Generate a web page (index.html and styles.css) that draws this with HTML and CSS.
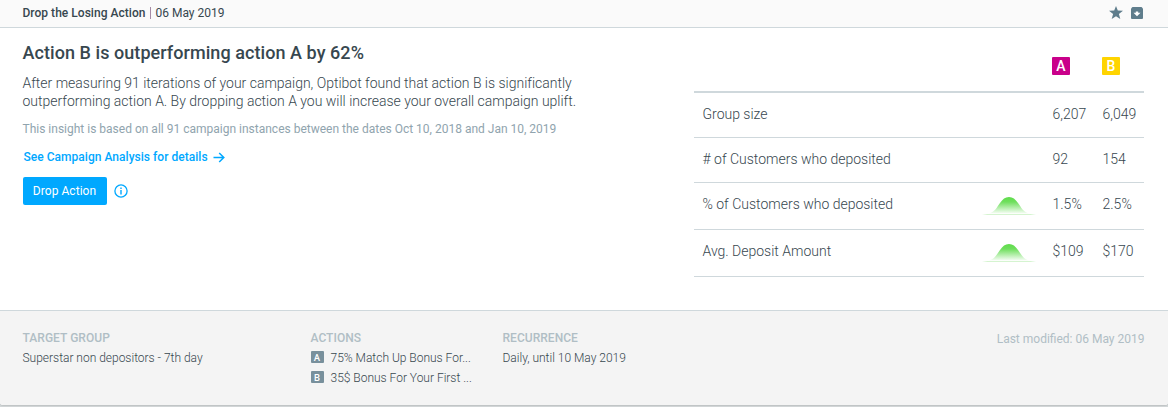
FILE: index.html
```html
<!DOCTYPE html>
<html lang="en">
<head>
    <meta charset="UTF-8">
    <meta name="viewport" content="width=device-width, initial-scale=1.0">
    <title>Drop the Losing Action</title>
    <link rel="stylesheet" href="styles.css">
</head>
<body>
    <div class="card">
        <!-- Top bar -->
        <div class="card-header">
            <div class="header-title"><b>Drop the Losing Action</b><span class="divider"></span><span class="date">06 May 2019</span></div>
            <div class="header-icons">
                <svg class="star" width="14" height="13" viewBox="0 0 14 13"><path d="M7 0l1.800 4.500 5.200.3-4.100 3.200 1.400 5L7 10.200 2.700 13l1.400-5L0 4.800l5.200-.3z" fill="#5f7d8c"/></svg>
                <svg class="archive" width="12" height="12" viewBox="0 0 12 12"><path d="M1.500 0h9L12 1.500V11a1 1 0 0 1-1 1H1a1 1 0 0 1-1-1V1.500z" fill="#5f7d8c"/><path d="M4.800 4.500h2.400v1.300h2.300L6 9.300 2.500 5.800h2.300z" fill="#fff"/></svg>
            </div>
        </div>

        <!-- Insight text and results table -->
        <div class="card-body">
            <div class="insight">
                <h1>Action B is outperforming action A by 62%</h1>
                <p class="summary">After measuring 91 iterations of your campaign, Optibot found that action B is significantly<br>outperforming action A. By dropping action A you will increase your overall campaign uplift.</p>
                <p class="note">This insight is based on all 91 campaign instances between the dates Oct 10, 2018 and Jan 10, 2019</p>
                <a class="details" href="#">See Campaign Analysis for details<svg width="12" height="11" viewBox="0 0 12 11"><path d="M.5 5.500h10.300M6.200 1l4.600 4.500L6.200 10" fill="none" stroke="#00a8ff" stroke-width="1.500"/></svg></a>
                <div class="buttons">
                    <button>Drop Action</button>
                    <svg width="14" height="14" viewBox="0 0 14 14"><circle cx="7" cy="7" r="6.100" fill="none" stroke="#00a8ff" stroke-width="1.300"/><path d="M6.300 3.500h1.400v1.400H6.300zM6.300 6h1.400v4.500H6.300z" fill="#00a8ff"/></svg>
                </div>
            </div>

            <div class="results">
                <div class="row head">
                    <span></span><span></span>
                    <span><i class="tag tag-a">A</i></span>
                    <span><i class="tag tag-b">B</i></span>
                </div>
                <div class="row">
                    <span class="label">Group size</span><span></span><span>6,207</span><span>6,049</span>
                </div>
                <div class="row">
                    <span class="label"># of Customers who deposited</span><span></span><span>92</span><span>154</span>
                </div>
                <div class="row tall">
                    <span class="label">% of Customers who deposited</span>
                    <svg class="curve" width="54" height="20" viewBox="0 0 54 20">
                        <defs>
                            <linearGradient id="green" x1="0" y1="0" x2="0" y2="1">
                                <stop offset="0" stop-color="#5fdc4b"/>
                                <stop offset=".3" stop-color="#6fdf5d"/>
                                <stop offset="1" stop-color="#f6fdf5"/>
                            </linearGradient>
                            <linearGradient id="base" x1="0" x2="1">
                                <stop offset="0" stop-color="#d5f4d0" stop-opacity="0"/>
                                <stop offset=".1" stop-color="#d5f4d0"/>
                                <stop offset=".9" stop-color="#d5f4d0"/>
                                <stop offset="1" stop-color="#d5f4d0" stop-opacity="0"/>
                            </linearGradient>
                        </defs>
                        <path d="M7 17.500C13 16 15 11 18 7 20.800 3 23 1 27 1S33.200 3 36 7C39 11 41 16 47 17.500z" fill="url(#green)"/>
                        <rect y="18" width="54" height="1" fill="url(#base)"/>
                    </svg>
                    <span>1.5%</span><span>2.5%</span>
                </div>
                <div class="row tall">
                    <span class="label">Avg. Deposit Amount</span>
                    <svg class="curve" width="54" height="20" viewBox="0 0 54 20">
                        <path d="M7 17.500C13 16 15 11 18 7 20.800 3 23 1 27 1S33.200 3 36 7C39 11 41 16 47 17.500z" fill="url(#green)"/>
                        <rect y="18" width="54" height="1" fill="url(#base)"/>
                    </svg>
                    <span>$109</span><span>$170</span>
                </div>
            </div>
        </div>

        <!-- Campaign info -->
        <div class="card-footer">
            <div class="info target">
                <h2>TARGET GROUP</h2>
                <p>Superstar non depositors - 7th day</p>
            </div>
            <div class="info actions">
                <h2>ACTIONS</h2>
                <p><i class="mini">A</i><span>75% Match Up Bonus For...</span></p>
                <p><i class="mini">B</i><span>35$ Bonus For Your First ...</span></p>
            </div>
            <div class="info recurrence">
                <h2>RECURRENCE</h2>
                <p>Daily, until 10 May 2019</p>
            </div>
            <div class="modified">Last modified: 06 May 2019</div>
        </div>
    </div>
</body>
</html>
```
FILE: styles.css
```css
* {
    margin: 0;
    padding: 0;
    box-sizing: border-box;
}

body {
    height: 407px;
    overflow: hidden;
    background-color: #d3d7d8;
    font-family: Roboto, sans-serif;
    color: #37474f;
}

.card {
    height: 405px;
    display: flex;
    flex-direction: column;
    background-color: #fff;
    border-radius: 0 0 3px 3px;
    overflow: hidden;
    box-shadow: 0 1px 1px #bfc4c5;
}

/* Top bar */
.card-header {
    height: 28px;
    display: flex;
    justify-content: space-between;
    padding: 0 25px 0 22.5px;
    background-color: #fafafa;
    border-bottom: 1px solid #cfd8dc;
}

.header-title {
    display: flex;
    align-items: center;
    font-size: 12px;
    line-height: 26px;
    height: 26px;
}

.header-title b {
    font-weight: 500;
    letter-spacing: 0.03px;
}

.divider {
    width: 1px;
    height: 12px;
    margin: 0 4px 0 5px;
    background-color: #a58aa5;
}

.header-icons {
    display: flex;
    gap: 8px;
    padding-top: 7px;
}

.star {
    margin-top: -1px;
}

/* Main area */
.card-body {
    height: 282px;
    display: flex;
    justify-content: space-between;
    padding: 0 24px 0 22.5px;
}

h1 {
    margin-top: 14px;
    font-size: 18px;
    line-height: 22px;
    font-weight: 500;
    letter-spacing: 0.06px;
}

.summary {
    margin-top: 10px;
    font-size: 14px;
    line-height: 18px;
    font-weight: 300;
    letter-spacing: -0.01px;
}

.note {
    margin-top: 11px;
    font-size: 12px;
    line-height: 16px;
    color: #90a4ae;
}

.details {
    display: flex;
    align-items: center;
    gap: 5px;
    margin-top: 12px;
    padding-left: 1px;
    font-size: 12px;
    line-height: 16px;
    font-weight: 500;
    letter-spacing: 0.03px;
    color: #00a8ff;
    text-decoration: none;
}

.buttons {
    display: flex;
    align-items: center;
    gap: 7px;
    margin-top: 12px;
}

button {
    width: 84px;
    height: 28px;
    border: none;
    border-radius: 2px;
    background-color: #00a8ff;
    color: #fff;
    font-family: Roboto, sans-serif;
    font-size: 12px;
    letter-spacing: 0.05px;
    cursor: pointer;
}

/* Results table */
.results {
    width: 450px;
}

.row {
    height: 45px;
    display: grid;
    grid-template-columns: 288px 70.5px 50px 41.5px;
    align-items: center;
    padding-bottom: 3px;
    border-bottom: 1px solid #cfd8dc;
    font-size: 14px;
    font-weight: 300;
}

.row.head {
    height: 65px;
    grid-template-columns: 288px 70px 50px 42px;
    padding: 12px 0 0;
    border-bottom-width: 2px;
}

.row.tall {
    height: 47px;
    padding-bottom: 5px;
}

.curve {
    position: relative;
    top: 2px;
}

.label {
    padding-left: 8.5px;
}

.tag {
    display: block;
    width: 18px;
    height: 18px;
    border-radius: 1px;
    color: #fff;
    font-size: 14px;
    line-height: 18px;
    font-weight: 500;
    font-style: normal;
    text-align: center;
}

.tag-a {
    background-color: #c9008a;
}

.tag-b {
    background-color: #ffd400;
}

/* Campaign info */
.card-footer {
    height: 95px;
    display: flex;
    padding: 19px 23.5px 0 22.5px;
    background-color: #f4f4f4;
    border-top: 1px solid #cfd8dc;
    font-size: 12px;
}

h2 {
    font-size: 12px;
    line-height: 16px;
    font-weight: 500;
    letter-spacing: 0.04px;
    color: #b0bec5;
    margin-bottom: 2px;
}

.info p {
    display: flex;
    align-items: center;
    line-height: 20px;
    font-weight: 300;
    letter-spacing: -0.01px;
}

.target {
    width: 288px;
}

.actions {
    width: 192px;
}

.mini {
    width: 13px;
    height: 12px;
    margin: -2px 7px 0 0;
    border-radius: 1px;
    background-color: #78909c;
    color: #fff;
    font-size: 9.5px;
    line-height: 13px;
    font-weight: 500;
    font-style: normal;
    text-align: center;
}

.modified {
    margin-left: auto;
    line-height: 18px;
    color: #b0bec5;
}
```
